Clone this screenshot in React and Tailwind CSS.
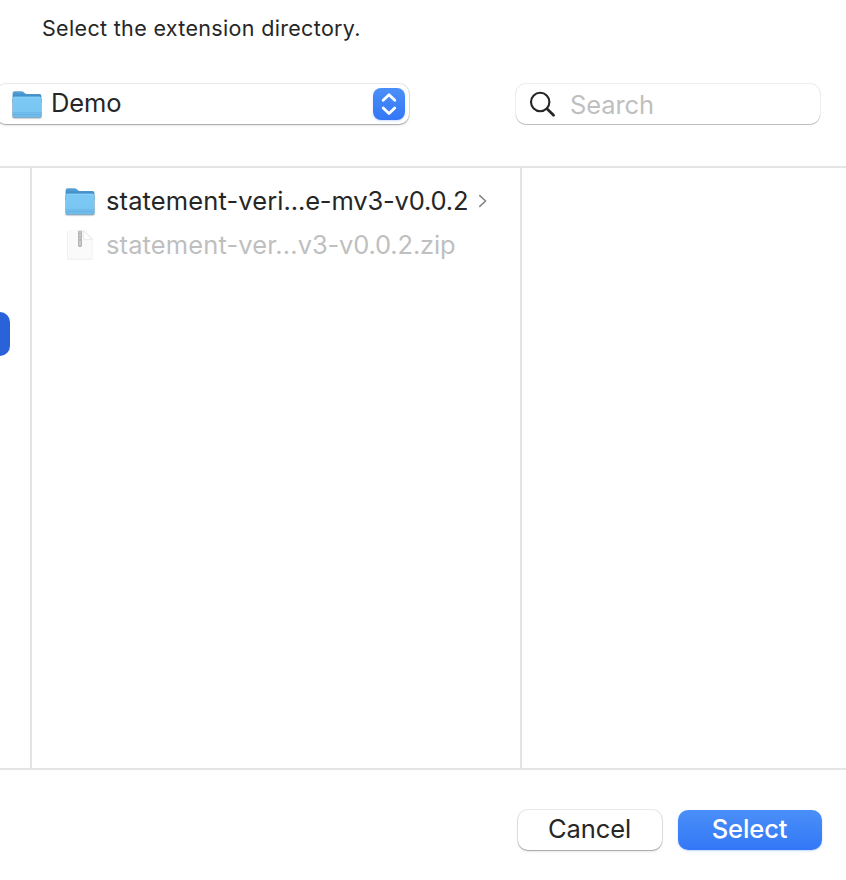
import React from 'react';

function FolderIcon({ id }) {
  return (
    <svg className="block shrink-0" width="34" height="32" viewBox="0 0 34 32" fill="none" aria-hidden="true">
      <defs>
        <linearGradient id={id} x1="0" y1="7" x2="0" y2="29" gradientUnits="userSpaceOnUse">
          <stop stopColor="#7cc9f6" />
          <stop offset="0.75" stopColor="#7ac6f3" />
          <stop offset="1" stopColor="#6bb6e6" />
        </linearGradient>
        <linearGradient id={`${id}-back`} x1="0" y1="2" x2="0" y2="8" gradientUnits="userSpaceOnUse">
          <stop stopColor="#5ba5d6" />
          <stop offset="1" stopColor="#3c8ac6" />
        </linearGradient>
      </defs>
      <rect x="2" y="8" width="30" height="22.2" rx="2" fill="#000" opacity="0.1" />
      <rect x="2.4" y="9" width="29.2" height="20.2" rx="2" fill="#45657c" opacity="0.5" />
      <path d="M2.6 4.2Q2.6 2.2 4.6 2.2H11.4Q12.6 2.2 13.5 3L14.9 4.3Q15.7 5 16.9 5H29.4Q31.4 5 31.4 7V14H2.6Z" fill={`url(#${id}-back)`} />
      <path d="M2.6 10Q2.6 7.8 4.8 7.8H29.2Q31.4 7.8 31.4 10V26.4Q31.4 28.4 29.4 28.4H4.6Q2.6 28.4 2.6 26.4Z" fill={`url(#${id})`} />
      <path d="M3.5 8.2H30.5" stroke="#93d5fb" strokeWidth="0.8" />
      <path d="M2.6 23.8H31.4M2.6 25.6H31.4" stroke="#5eaadb" strokeWidth="0.7" />
    </svg>
  );
}

function ZipIcon() {
  return (
    <svg className="-mt-0.5 block shrink-0" width="34" height="34" viewBox="0 0 34 34" fill="none" aria-hidden="true">
      <path d="M4 4.5Q4 2.5 6 2.5H21.5L29.8 10.8V29.6Q29.8 31.8 27.8 31.8H6Q4 31.8 4 29.6Z" fill="#000" opacity="0.07" />
      <path d="M4.6 4.6Q4.6 2.8 6.4 2.8H20.6L29.4 11.4V28.8Q29.4 30.8 27.4 30.8H6.6Q4.6 30.8 4.6 28.8Z" fill="#fafafa" />
      <path d="M20.4 2.8L29.4 11.6H22.2Q20.4 11.6 20.4 9.8Z" fill="#fff" stroke="#e4e4e4" strokeWidth="0.8" />
      <path d="M15 2.8H19V17.4Q19 19 17 19Q15 19 15 17.4Z" fill="#b5b5b5" />
      <path d="M16.2 4H18M16.2 7H18M16.2 10H18" stroke="#e2e2e2" strokeWidth="1.2" />
      <path d="M17 13V17" stroke="#dedede" strokeWidth="1.2" />
    </svg>
  );
}

function LocationPopup() {
  return (
    <button className="-ml-1 flex h-10 w-[413px] items-center rounded-[10px] bg-white pr-1 pl-3.5 text-left shadow-[0_0_0_1px_rgba(0,0,0,0.09),0_1px_1px_rgba(0,0,0,0.22),0_2px_3px_rgba(0,0,0,0.08)]">
      <span className="pt-px">
        <FolderIcon id="popup-folder" />
      </span>
      <span className="ml-[7px] -mt-0.5 flex-1 text-[25.5px] leading-[30px] tracking-[-0.1px]">Demo</span>
      <span className="flex size-8 items-center justify-center rounded-[8px] bg-linear-to-b from-[#4a8ff8] to-[#3477f6] shadow-[0_1px_2px_rgba(52,119,246,0.25)]">
        <svg width="32" height="32" viewBox="0 0 32 32" fill="none" stroke="#fff" strokeWidth="2.8" strokeLinecap="round" strokeLinejoin="round" aria-hidden="true">
          <path d="M10.2 12.2L16 6.7L21.8 12.2M10.2 20L16 25.5L21.8 20" />
        </svg>
      </span>
    </button>
  );
}

function SearchField() {
  return (
    <div className="mr-[26px] flex h-10 w-[304px] items-center rounded-[10px] bg-white pl-[13px] shadow-[0_0_0_1px_rgba(0,0,0,0.07),0_1px_0_rgba(0,0,0,0.2)]">
      <svg width="28" height="28" viewBox="0 0 28 28" fill="none" stroke="#252525" aria-hidden="true">
        <circle cx="11.2" cy="12" r="9.2" strokeWidth="2.1" />
        <path d="M18 18.7L24.6 25.2" strokeWidth="2.7" strokeLinecap="round" />
      </svg>
      <span className="ml-[13px] mt-0.5 text-[25.5px] leading-[30px] tracking-[-0.1px] text-[#bfbfbf]">Search</span>
    </div>
  );
}

function FileName({ start, end }) {
  return (
    <span className="ml-[9px] -mt-0.5 text-[25.5px] leading-[30px]">
      <span className="tracking-[0.12px]">{start}</span>
      <span className="tracking-[-0.16px]">{end}</span>
    </span>
  );
}

export default function App() {
  return (
    <main className="flex h-[880px] w-[846px] flex-col overflow-hidden bg-white font-['Inter','Liberation_Sans',sans-serif] whitespace-nowrap text-[#262626]">
      <h1 className="h-[84px] pt-[15px] pl-[42px] text-[21.5px] leading-[26px] font-normal tracking-[0.33px]">Select the extension directory.</h1>
      <div className="flex h-[82px] items-start justify-between">
        <LocationPopup />
        <SearchField />
      </div>

      <section className="flex h-[604px] border-y-2 border-[#e4e4e4]">
        <div className="w-8 border-r-2 border-[#e4e4e4] pt-[144px]">
          <div className="h-11 w-2.5 rounded-r-[10px] bg-[#2962d9]" />
        </div>
        <div className="w-[490px] border-r-2 border-[#e4e4e4] pt-3 pl-[31px]">
          <div className="flex h-11 items-center">
            <FolderIcon id="row-folder" />
            <FileName start="statement-veri" end="...e-mv3-v0.0.2" />
            <svg className="ml-2.5 -mt-0.5" width="10" height="14" viewBox="0 0 10 14" fill="none" stroke="#858585" strokeWidth="1.6" strokeLinecap="round" strokeLinejoin="round" aria-hidden="true">
              <path d="M1.8 1.6L7.6 7L1.8 12.4" />
            </svg>
          </div>
          <div className="flex h-11 items-center text-[#bfbfbf]">
            <ZipIcon />
            <FileName start="statement-ver..." end="v3-v0.0.2.zip" />
          </div>
        </div>
        <div className="flex-1" />
      </section>

      <footer className="flex justify-end gap-4 pt-10 pr-6">
        <button className="h-10 w-36 rounded-[10px] bg-white pr-px pb-0.5 text-[25.5px] leading-[30px] tracking-[-0.1px] shadow-[0_0_0_1px_rgba(0,0,0,0.09),0_1px_1px_rgba(0,0,0,0.22),0_2px_3px_rgba(0,0,0,0.08)]">Cancel</button>
        <button className="h-10 w-36 rounded-[10px] bg-linear-to-b from-[#4a8ff8] to-[#3477f6] pr-px pb-0.5 text-[25.5px] leading-[30px] font-medium tracking-[-0.1px] text-white shadow-[0_1px_2px_rgba(52,119,246,0.3)]">Select</button>
      </footer>
    </main>
  );
}
